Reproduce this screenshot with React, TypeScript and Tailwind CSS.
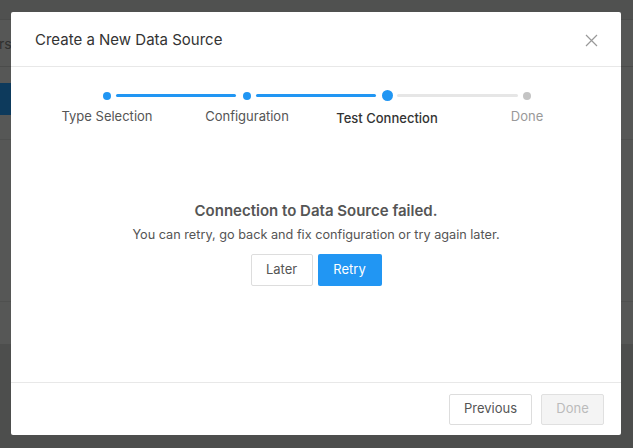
import React from 'react'

const steps = [
  { label: 'Type Selection', state: 'done' },
  { label: 'Configuration', state: 'done' },
  { label: 'Test Connection', state: 'current' },
  { label: 'Done', state: 'todo' },
]

function Stepper() {
  return (
    <div className="mx-auto grid w-[560px] translate-x-[1px] grid-cols-4">
      {steps.map((s, i) => (
        <div key={s.label} className="relative flex flex-col items-center">
          <div className="flex h-[11px] items-center justify-center">
            {s.state === 'current' ? (
              <span className="h-[11px] w-[11px] rounded-full bg-[#2196f3]" />
            ) : (
              <span
                className={
                  s.state === 'done'
                    ? 'h-[8px] w-[8px] rounded-full bg-[#2196f3]'
                    : 'h-[8px] w-[8px] rounded-full bg-[#c4c4c4]'
                }
              />
            )}
          </div>
          {i < steps.length - 1 && (
            <span
              className={
                steps[i + 1].state === 'todo'
                  ? 'absolute left-[calc(50%+10px)] top-[4px] h-[3px] w-[121px] rounded-full bg-[#e6e6e6]'
                  : 'absolute left-[calc(50%+9px)] top-[4px] h-[3px] w-[120px] rounded-full bg-[#2196f3]'
              }
            />
          )}
          <span
            className={
              s.state === 'current'
                ? 'mt-[8px] text-[13px] leading-[18px] font-medium text-[#333]'
                : s.state === 'todo'
                  ? 'mt-[6px] text-[13px] leading-[18px] text-[#999]'
                  : 'mt-[6px] text-[13px] leading-[18px] text-[#555]'
            }
          >
            {s.label}
          </span>
        </div>
      ))}
    </div>
  )
}

export default function App() {
  return (
    <div className="relative h-[448px] w-[633px] overflow-hidden bg-[#565756] font-['Inter',sans-serif]">
      {/* dimmed page behind the modal */}
      <div className="flex h-full flex-col">
        <div className="h-[20px] border-b border-[#4b4c4b] bg-[#505150]" />
        <div className="flex h-[47px] items-center border-b border-[#4b4c4b] text-[14px] text-[#2f302f]">
          <span className="-ml-[1px]">rs</span>
        </div>
        <div className="h-[16px]" />
        <div className="h-[32px] w-[120px] bg-[#0d3a5c]" />
        <div className="h-[25px] border-b border-[#4f504f]" />
        <div className="h-[162px] border-b border-[#4f504f]" />
        <div className="h-[42px]" />
        <div className="flex-1 bg-[#4d4e4d]" />
      </div>

      {/* modal */}
      <div className="absolute left-[11px] top-[12px] flex h-[423px] w-[610px] flex-col rounded-[2px] bg-white">
        <div className="flex h-[55px] shrink-0 items-center justify-between border-b border-[#e8e8e8] pl-6 pr-[23px] pt-[2px]">
          <h2 className="text-[15px] font-normal text-[#333]">Create a New Data Source</h2>
          <svg width="13" height="13" viewBox="0 0 13 13" className="text-[#999]">
            <path d="M1 1 L12 12 M12 1 L1 12" stroke="currentColor" strokeWidth="1.2" fill="none" />
          </svg>
        </div>

        <div className="flex flex-1 flex-col items-center pt-[23px]">
          <Stepper />
          <h3 className="mt-[74px] text-[15px] leading-[20px] font-semibold text-[#555]">
            Connection to Data Source failed.
          </h3>
          <p className="mt-[5px] text-[12.7px] leading-[18px] text-[#555]">
            You can retry, go back and fix configuration or try again later.
          </p>
          <div className="mt-[10px] flex gap-[5px]">
            <button className="h-[32px] w-[62px] rounded-[2px] border border-[#ddd] bg-white text-[13px] text-[#555]">
              Later
            </button>
            <button className="h-[32px] w-[64px] rounded-[2px] bg-[#2196f3] text-[13px] text-white">
              Retry
            </button>
          </div>
        </div>

        <div className="flex h-[53px] shrink-0 items-center justify-end gap-[9px] border-t border-[#e8e8e8] pr-[17px]">
          <button className="h-[31px] w-[83px] rounded-[2px] border border-[#ddd] bg-white text-[13px] text-[#555]">
            Previous
          </button>
          <button
            disabled
            className="h-[31px] w-[63px] rounded-[2px] border border-[#e0e0e0] bg-[#f4f4f4] text-[13px] text-[#bbb]"
          >
            Done
          </button>
        </div>
      </div>
    </div>
  )
}
